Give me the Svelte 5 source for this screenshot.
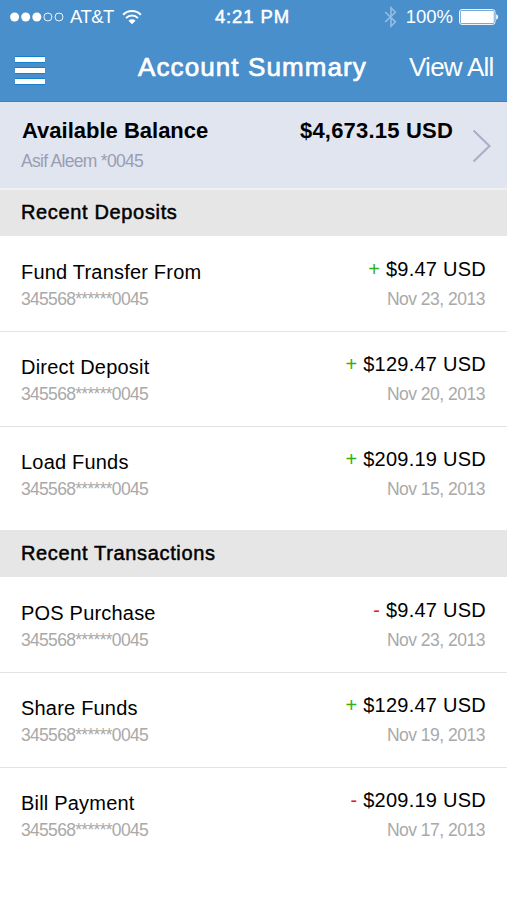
<script lang="ts">
	const account = '345568******0045';

	const sections = [
		{
			title: 'Recent Deposits',
			rows: [
				{ name: 'Fund Transfer From', sign: '+', amount: '$9.47', date: 'Nov 23, 2013' },
				{ name: 'Direct Deposit', sign: '+', amount: '$129.47', date: 'Nov 20, 2013' },
				{ name: 'Load Funds', sign: '+', amount: '$209.19', date: 'Nov 15, 2013' }
			]
		},
		{
			title: 'Recent Transactions',
			rows: [
				{ name: 'POS Purchase', sign: '-', amount: '$9.47', date: 'Nov 23, 2013' },
				{ name: 'Share Funds', sign: '+', amount: '$129.47', date: 'Nov 19, 2013' },
				{ name: 'Bill Payment', sign: '-', amount: '$209.19', date: 'Nov 17, 2013' }
			]
		}
	];
</script>

<div class="screen">
	<header>
		<div class="status">
			<div class="carrier">
				<svg class="signal" width="54" height="10" viewBox="0 0 54 10">
					{#each { length: 5 } as _, i}
						<circle
							cx={4.6 + i * 11.1}
							cy="5"
							r={i < 3 ? 4.5 : 4}
							fill={i < 3 ? '#fff' : 'none'}
							stroke={i < 3 ? 'none' : '#fff'}
							stroke-width="0.9"
						/>
					{/each}
				</svg>
				<span class="network">AT&amp;T</span>
				<svg class="wifi" width="20" height="16" viewBox="0 0 20 16">
					<g fill="none" stroke="#fff" stroke-width="2">
						<path d="M1.1 5.8a12.6 12.6 0 0 1 17.8 0" />
						<path d="M4 9.1a8.5 8.5 0 0 1 12 0" />
					</g>
					<path d="M10 15.2 6.5 11.7a5 5 0 0 1 7 0z" fill="#fff" />
				</svg>
			</div>
			<span class="time">4:21 PM</span>
			<div class="power">
				<svg class="bluetooth" width="14" height="22" viewBox="0 0 14 22">
					<path
						d="M1.2 6 11.4 15.8 7 20.2V1.8l4.4 4.4L1.2 16"
						fill="none"
						stroke="#93bde2"
						stroke-width="1.6"
					/>
				</svg>
				<span class="percent">100%</span>
				<svg class="battery" width="40" height="16" viewBox="0 0 40 16">
					<rect x="0.5" y="0.5" width="35.5" height="15" rx="2.5" fill="none" stroke="#fff" stroke-width="0.9" />
					<rect x="1.7" y="1.7" width="33.1" height="12.6" rx="1" fill="#fff" />
					<path d="M37.2 5.3c2.6.8 2.6 4.6 0 5.4z" fill="#fff" />
				</svg>
			</div>
		</div>
		<nav>
			<button class="menu" aria-label="Menu">
				<i></i>
				<i></i>
				<i></i>
			</button>
			<h1>Account Summary</h1>
			<a href="#all">View All</a>
		</nav>
	</header>

	<div class="balance">
		<div class="owner">
			<strong>Available Balance</strong>
			<small>Asif Aleem *0045</small>
		</div>
		<strong class="total">$4,673.15 USD</strong>
		<svg class="chevron" width="20" height="34" viewBox="0 0 20 34">
			<path d="M1.5 1.5 17.5 17 1.5 32.5" fill="none" stroke="#aaaec6" stroke-width="2.1" />
		</svg>
	</div>

	{#each sections as section}
		<section>
			<h2>{section.title}</h2>
			{#each section.rows as row}
				<div class="row">
					<div class="left">
						<p class="name">{row.name}</p>
						<p class="meta account">{account}</p>
					</div>
					<div class="right">
						<p class="amount">
							<span class:minus={row.sign === '-'}>{row.sign}</span>
							{row.amount} USD
						</p>
						<p class="meta">{row.date}</p>
					</div>
				</div>
			{/each}
		</section>
	{/each}
</div>

<style>
	:global(body) {
		margin: 0;
		background: #fff;
	}

	.screen {
		width: 507px;
		height: 900px;
		overflow: hidden;
		background: #fff;
		color: #000;
		font-family: 'Liberation Sans', Arial, Helvetica, sans-serif;
		white-space: nowrap;
	}

	header {
		box-sizing: border-box;
		height: 102px;
		background: #498fcc;
		border-bottom: 1px solid #3684c5;
		color: #fff;
	}

	.status {
		display: grid;
		grid-template-columns: 205px 95px 1fr;
		height: 32px;
		font-size: 18.5px;
		line-height: 33px;
	}

	.carrier,
	.power {
		display: flex;
		align-items: center;
	}

	.carrier {
		padding-left: 10px;
	}

	.network {
		margin-left: 6px;
		letter-spacing: -0.5px;
	}

	.wifi {
		margin-left: 8px;
	}

	.time {
		text-align: center;
		letter-spacing: 0.9px;
		-webkit-text-stroke: 0.5px #fff;
	}

	.power {
		justify-content: flex-end;
		padding-right: 8px;
	}

	.bluetooth {
		margin-right: -1px;
	}

	.percent {
		margin-left: 9px;
	}

	.battery {
		margin-left: 6px;
	}

	nav {
		display: grid;
		grid-template-columns: 123px 1fr 112px;
		height: 69px;
		line-height: 70px;
	}

	.menu {
		display: flex;
		flex-direction: column;
		gap: 6px;
		padding: 25px 0 0 15px;
		border: 0;
		background: none;
	}

	.menu i {
		width: 30px;
		height: 5px;
		background: #fff;
		box-shadow:
			0 -1px #1580cb,
			0 1px #1580cb;
	}

	h1 {
		margin: 0;
		padding-left: 15px;
		font-size: 26px;
		font-weight: 400;
		letter-spacing: 1.1px;
		-webkit-text-stroke: 0.7px #fff;
	}

	nav a {
		padding-left: 14px;
		color: #fff;
		font-size: 26px;
		letter-spacing: -0.75px;
		text-decoration: none;
	}

	.balance {
		box-sizing: border-box;
		display: flex;
		height: 88px;
		padding: 16px 16px 0 22px;
		background: #e1e5f0;
		border-bottom: 2px solid #f0f0f3;
	}

	.balance strong {
		font-size: 22px;
		line-height: 26px;
	}

	.owner {
		flex: 1;
		display: flex;
		flex-direction: column;
	}

	.owner small {
		margin: 7px 0 0 -1px;
		color: #9a9db2;
		font-size: 17.5px;
		line-height: 20px;
		letter-spacing: -0.7px;
	}

	.balance .total {
		letter-spacing: 0.2px;
	}

	.chevron {
		margin: 11px -1px 0 19px;
	}

	h2 {
		height: 46px;
		margin: 0;
		padding-left: 21px;
		background: #e6e6e6;
		font-size: 20px;
		font-weight: 400;
		line-height: 45px;
		letter-spacing: 0.65px;
		-webkit-text-stroke: 0.5px #000;
	}

	section + section h2 {
		height: 47px;
		line-height: 46px;
	}

	.row {
		box-sizing: border-box;
		display: flex;
		justify-content: space-between;
		height: 95px;
		padding: 21px 21px 0;
	}

	.row + .row {
		padding-top: 20px;
		border-top: 1px solid #e2e2e2;
	}

	.row:last-child {
		height: 104px;
	}

	p {
		margin: 0;
	}

	.name {
		padding-top: 3px;
		font-size: 20px;
		line-height: 24px;
		letter-spacing: 0.2px;
	}

	.amount {
		font-size: 20px;
		line-height: 24px;
		letter-spacing: 0.25px;
	}

	.amount span {
		color: #2fb112;
	}

	.amount .minus {
		color: #f01820;
	}

	.meta {
		padding-top: 2px;
		color: #a9a9a9;
		font-size: 17.5px;
		line-height: 26px;
		letter-spacing: -0.5px;
	}

	.account {
		letter-spacing: -0.7px;
	}

	.right {
		text-align: right;
	}

	.right .meta {
		padding: 5px 1px 0 0;
	}
</style>
